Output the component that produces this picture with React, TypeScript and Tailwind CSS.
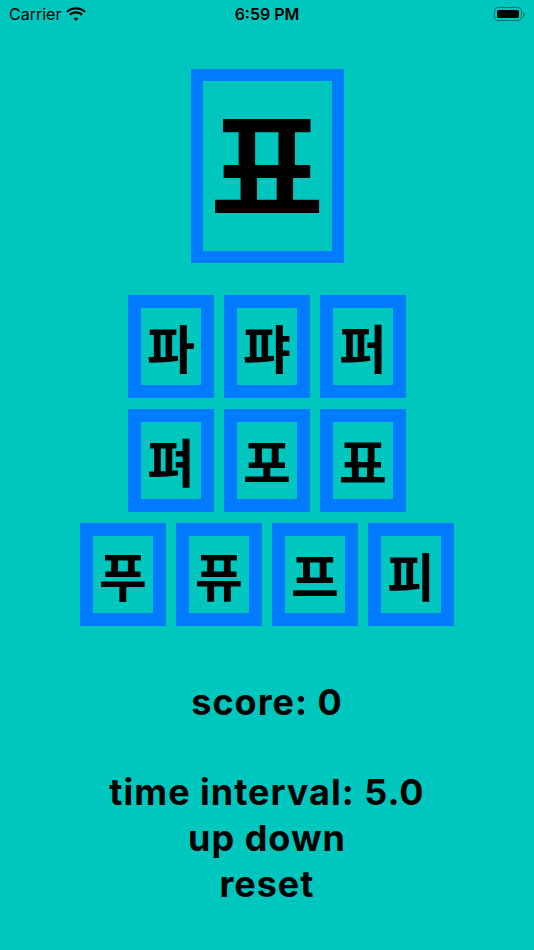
import React from 'react';

const rows: string[][] = [
  ['파', '퍄', '퍼'],
  ['펴', '포', '표'],
  ['푸', '퓨', '프', '피'],
];

const korean = { fontFamily: '"Noto Sans CJK KR", "Noto Sans", sans-serif' };
const latin = { fontFamily: 'Inter, "Liberation Sans", sans-serif' };

const StatusBar: React.FC = () => (
  <div className="relative flex h-[28px] items-center justify-between px-[9px] text-black" style={latin}>
    <div className="flex items-center gap-[5px] text-[16px]">
      <span>Carrier</span>
      <svg width="20" height="15" viewBox="0 0 19 14">
        <path d="M9.5 2.2c3 0 5.8 1.1 7.9 3.1l1.4-1.5C16.3 1.4 13 0 9.5 0S2.7 1.4 0.2 3.8l1.4 1.5C3.7 3.3 6.5 2.2 9.5 2.2z" fill="black" />
        <path d="M9.5 6.1c1.9 0 3.7 0.7 5 2l1.4-1.5C14.2 5 11.9 4 9.5 4S4.8 5 3.1 6.6l1.4 1.5c1.3-1.3 3.1-2 5-2z" fill="black" />
        <path d="M9.5 9.9c0.9 0 1.6 0.3 2.2 0.9L9.5 13.2 7.3 10.8c0.6-0.6 1.3-0.9 2.2-0.9z" fill="black" />
      </svg>
    </div>
    <span className="absolute left-1/2 -translate-x-1/2 text-[16px] font-semibold">6:59 PM</span>
    <div className="flex items-center">
      <div className="flex h-[14px] w-[28px] items-center rounded-[4px] border border-black/40 p-[2px]">
        <div className="h-full w-full rounded-[2px] bg-black" />
      </div>
      <div className="ml-[1px] h-[5px] w-[2px] rounded-r-sm bg-black/40" />
    </div>
  </div>
);

const Tile: React.FC<{ ch: string }> = ({ ch }) => (
  <div className="flex h-[103px] w-[86px] items-center justify-center border-[13px] border-[#007AFF]">
    <span className="text-[52px] font-bold leading-none text-black" style={korean}>
      {ch}
    </span>
  </div>
);

export default function App() {
  return (
    <div className="flex h-[950px] w-[534px] flex-col bg-[#00C7BE]">
      <StatusBar />

      <div className="mt-[41px] flex justify-center">
        <div className="flex h-[194px] w-[153px] items-center justify-center border-[12px] border-[#007AFF] pb-[12px]">
          <span className="text-[124px] font-bold leading-none text-black" style={korean}>
            표
          </span>
        </div>
      </div>

      <div className="mt-[32px] flex flex-col items-center gap-[11px]">
        {rows.map((row, i) => (
          <div key={i} className="flex gap-[10px]">
            {row.map((ch) => (
              <Tile key={ch} ch={ch} />
            ))}
          </div>
        ))}
      </div>

      <div className="mt-[53px] flex flex-col items-center text-[36px] font-bold leading-[46px] tracking-[1px] text-black" style={latin}>
        <div>score: 0</div>
        <div className="h-[44px]" />
        <div>time interval: 5.0</div>
        <div>up down</div>
        <div>reset</div>
      </div>
    </div>
  );
}
